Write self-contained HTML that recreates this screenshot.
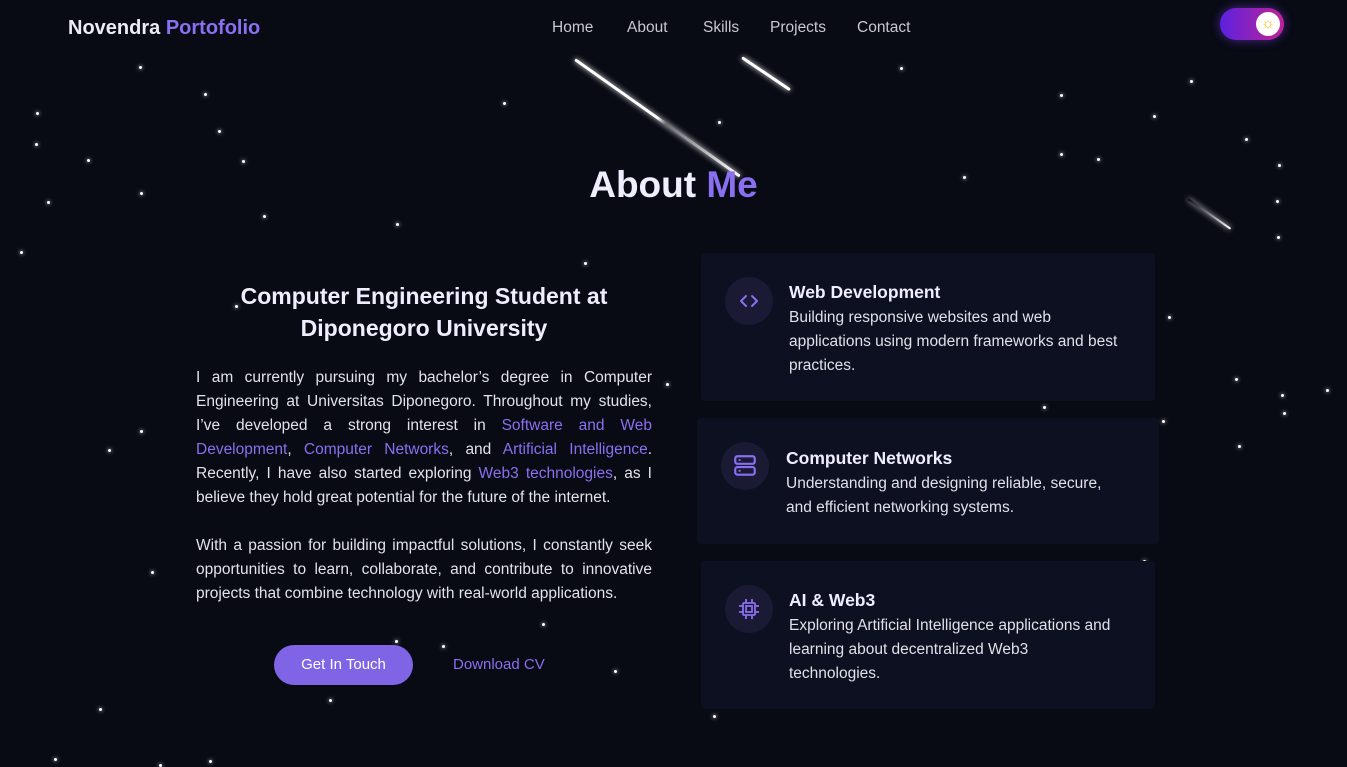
<!DOCTYPE html>
<html><head><meta charset="utf-8"><style>
*{margin:0;padding:0;box-sizing:border-box}
body{width:1347px;height:767px;background:#080a14;font-family:"Liberation Sans",sans-serif;color:#e6e6ee;position:relative;overflow:hidden}
.abs{position:absolute}
.star{position:absolute;width:3px;height:3px;border-radius:50%;background:#fff;box-shadow:0 0 4px #fff}
.logo{left:68px;top:17px;font-size:20px;font-weight:bold;color:#ececf5}
.logo span{color:#8a6ff0}
.nav{top:19px;font-size:15.5px;color:#c8c8d2}
.toggle{left:1220px;top:8px;width:64px;height:32px;border-radius:16px;background:linear-gradient(90deg,#5b22e0,#c02296);box-shadow:0 0 10px rgba(120,60,230,.6)}
.toggle i{position:absolute;right:4px;top:4px;width:24px;height:24px;border-radius:50%;background:#fff;color:#f2b600;font-size:15px;line-height:24px;text-align:center;font-style:normal}
h1{position:absolute;left:0;width:1347px;text-align:center;top:164px;font-size:37px;font-weight:bold;color:#eef}
h1 span{color:#8a6ff0}
h2{position:absolute;left:180px;width:488px;top:280px;text-align:center;font-size:23px;line-height:32px;font-weight:bold;color:#eef}
.p{position:absolute;left:196px;width:456px;font-size:15.5px;line-height:24px;text-align:justify;color:#e2e2ea}
.p a{color:#8a6ff0}
.btn{left:274px;top:645px;width:139px;height:40px;border-radius:20px;background:#7f65e6;color:#fff;font-size:15px;text-align:center;line-height:40px}
.dl{left:453px;top:656px;font-size:15px;color:#8a6ff0}
.card{position:absolute;background:#0d1021;border-radius:4px}
.ic{position:absolute;width:48px;height:48px;border-radius:50%;background:#1a1a35;display:flex;align-items:center;justify-content:center}
.ct{position:absolute;font-size:17.5px;font-weight:bold;color:#eef}
.cd{position:absolute;font-size:15.5px;line-height:24px;color:#e0e0e8;white-space:nowrap}
.met{position:absolute;height:3px;background:linear-gradient(90deg,rgba(255,255,255,0),#fff);transform-origin:0 50%;box-shadow:0 0 6px #fff;border-radius:2px}
</style></head><body>
<div class="met" style="left:575px;top:58px;width:202px;transform:rotate(35.3deg);background:linear-gradient(90deg,#fff,#fff 50%,rgba(255,255,255,.4) 55%,#fff)"></div>
<div class="met" style="left:742px;top:56px;width:58px;transform:rotate(34deg);background:#fff"></div>
<div class="met" style="left:1188px;top:198px;width:52px;transform:rotate(35deg);height:2px"></div>
<div class="star" style="left:139px;top:66px"></div><div class="star" style="left:204px;top:93px"></div><div class="star" style="left:36px;top:112px"></div><div class="star" style="left:218px;top:130px"></div><div class="star" style="left:35px;top:143px"></div><div class="star" style="left:87px;top:159px"></div><div class="star" style="left:242px;top:160px"></div><div class="star" style="left:140px;top:192px"></div><div class="star" style="left:47px;top:201px"></div><div class="star" style="left:263px;top:215px"></div><div class="star" style="left:396px;top:223px"></div><div class="star" style="left:20px;top:251px"></div><div class="star" style="left:503px;top:102px"></div><div class="star" style="left:718px;top:121px"></div><div class="star" style="left:900px;top:67px"></div><div class="star" style="left:1060px;top:94px"></div><div class="star" style="left:1153px;top:115px"></div><div class="star" style="left:1245px;top:138px"></div><div class="star" style="left:1060px;top:153px"></div><div class="star" style="left:1097px;top:158px"></div><div class="star" style="left:1278px;top:164px"></div><div class="star" style="left:963px;top:176px"></div><div class="star" style="left:1276px;top:200px"></div><div class="star" style="left:1277px;top:236px"></div><div class="star" style="left:1190px;top:80px"></div><div class="star" style="left:584px;top:262px"></div><div class="star" style="left:235px;top:305px"></div><div class="star" style="left:666px;top:383px"></div><div class="star" style="left:1235px;top:378px"></div><div class="star" style="left:1281px;top:394px"></div><div class="star" style="left:1326px;top:389px"></div><div class="star" style="left:1043px;top:406px"></div><div class="star" style="left:1283px;top:412px"></div><div class="star" style="left:140px;top:430px"></div><div class="star" style="left:1238px;top:445px"></div><div class="star" style="left:108px;top:449px"></div><div class="star" style="left:151px;top:571px"></div><div class="star" style="left:542px;top:623px"></div><div class="star" style="left:395px;top:640px"></div><div class="star" style="left:442px;top:645px"></div><div class="star" style="left:614px;top:670px"></div><div class="star" style="left:329px;top:699px"></div><div class="star" style="left:99px;top:708px"></div><div class="star" style="left:713px;top:715px"></div><div class="star" style="left:54px;top:758px"></div><div class="star" style="left:159px;top:764px"></div><div class="star" style="left:209px;top:760px"></div><div class="star" style="left:1143px;top:560px"></div><div class="star" style="left:1162px;top:420px"></div><div class="star" style="left:1168px;top:316px"></div>
<div class="abs logo">Novendra <span>Portofolio</span></div>
<div class="abs nav" style="left:552px">Home</div>
<div class="abs nav" style="left:627px">About</div>
<div class="abs nav" style="left:703px">Skills</div>
<div class="abs nav" style="left:770px">Projects</div>
<div class="abs nav" style="left:857px">Contact</div>
<div class="abs toggle"><i>☼</i></div>
<h1>About <span>Me</span></h1>
<h2>Computer Engineering Student at<br>Diponegoro University</h2>
<div class="p" style="top:366px">I am currently pursuing my bachelor’s degree in Computer Engineering at Universitas Diponegoro. Throughout my studies, I’ve developed a strong interest in <a>Software and Web Development</a>, <a>Computer Networks</a>, and <a>Artificial Intelligence</a>. Recently, I have also started exploring <a>Web3 technologies</a>, as I believe they hold great potential for the future of the internet.</div>
<div class="p" style="top:534px">With a passion for building impactful solutions, I constantly seek opportunities to learn, collaborate, and contribute to innovative projects that combine technology with real-world applications.</div>
<div class="abs btn">Get In Touch</div>
<div class="abs dl">Download CV</div>

<div class="card" style="left:701px;top:253px;width:454px;height:148px"></div>
<div class="ic" style="left:725px;top:277px"><svg width="24" height="24" viewBox="0 0 24 24" fill="none" stroke="#8a6ff0" stroke-width="2" stroke-linecap="round" stroke-linejoin="round"><path d="M9 7l-5 5 5 5M15 7l5 5-5 5"/></svg></div>
<div class="ct" style="left:789px;top:282px">Web Development</div>
<div class="cd" style="left:789px;top:306px">Building responsive websites and web<br>applications using modern frameworks and best<br>practices.</div>

<div class="card" style="left:697px;top:418px;width:462px;height:126px"></div>
<div class="ic" style="left:721px;top:442px"><svg width="26" height="26" viewBox="0 0 24 24" fill="none" stroke="#8a6ff0" stroke-width="2"><rect x="3" y="3" width="18" height="7" rx="2"/><rect x="3" y="13" width="18" height="7" rx="2"/><path d="M7 6.5h.01M7 16.5h.01" stroke-linecap="round"/></svg></div>
<div class="ct" style="left:786px;top:448px">Computer Networks</div>
<div class="cd" style="left:786px;top:472px">Understanding and designing reliable, secure,<br>and efficient networking systems.</div>

<div class="card" style="left:701px;top:561px;width:454px;height:148px"></div>
<div class="ic" style="left:725px;top:585px"><svg width="24" height="24" viewBox="0 0 24 24" fill="none" stroke="#8a6ff0" stroke-width="1.8"><rect x="6" y="6" width="12" height="12" rx="1"/><rect x="9" y="9" width="6" height="6"/><path d="M9 2v4M15 2v4M9 18v4M15 18v4M2 9h4M2 15h4M18 9h4M18 15h4"/></svg></div>
<div class="ct" style="left:789px;top:590px">AI &amp; Web3</div>
<div class="cd" style="left:789px;top:614px">Exploring Artificial Intelligence applications and<br>learning about decentralized Web3<br>technologies.</div>
</body></html>
